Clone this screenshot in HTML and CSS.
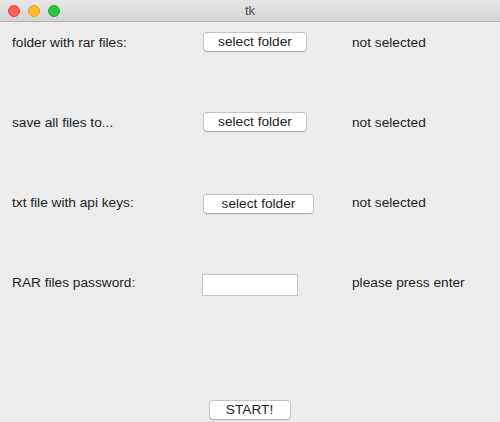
FILE: index.html
```html
<!DOCTYPE html>
<html>
<head>
<meta charset="utf-8">
<link rel="stylesheet" href="styles.css">
</head>
<body>
<div class="window">
  <div class="titlebar">
    <div class="lights">
      <span class="light red"></span>
      <span class="light yellow"></span>
      <span class="light green"></span>
    </div>
    <div class="title">tk</div>
  </div>
  <div class="content">
    <div class="form">
      <div class="label">folder with rar files:</div>
      <div class="cell"><button class="btn w104">select folder</button></div>
      <div class="status">not selected</div>

      <div class="label">save all files to...</div>
      <div class="cell"><button class="btn w104">select folder</button></div>
      <div class="status">not selected</div>

      <div class="label">txt file with api keys:</div>
      <div class="cell"><button class="btn w111 low">select folder</button></div>
      <div class="status">not selected</div>

      <div class="label">RAR files password:</div>
      <div class="cell"><input class="entry" type="text"></div>
      <div class="status">please press enter</div>
    </div>
    <div class="footer">
      <button class="btn start">START!</button>
    </div>
  </div>
</div>
</body>
</html>
```

FILE: styles.css
```css
* { box-sizing: border-box; }
html, body {
  margin: 0;
  padding: 0;
  width: 500px;
  height: 422px;
  overflow: hidden;
  background: #ececec;
  font-family: "Liberation Sans", Arial, sans-serif;
  font-size: 13.7px;
  color: #1e1e1e;
}
.window {
  width: 500px;
  height: 422px;
  display: flex;
  flex-direction: column;
}
.titlebar {
  height: 22px;
  flex: none;
  position: relative;
  background: linear-gradient(#e8e8e8, #d3d3d3);
  border-bottom: 1px solid #b1b1b1;
  display: flex;
  align-items: center;
  justify-content: center;
}
.lights {
  position: absolute;
  left: 8px;
  top: 5px;
  display: flex;
  gap: 8px;
}
.light {
  width: 12px;
  height: 12px;
  border-radius: 50%;
  display: block;
}
.red { background: #fe5f57; border: 0.5px solid #e14640; }
.yellow { background: #febc2e; border: 0.5px solid #dfa123; }
.green { background: #28c840; border: 0.5px solid #1daa2c; }
.title {
  color: #4d4d4d;
  font-size: 13px;
  line-height: 22px;
}
.content {
  flex: 1;
  display: flex;
  flex-direction: column;
  padding-top: 10px;
}
.form {
  display: grid;
  grid-template-columns: 190px 150px 1fr;
  grid-auto-rows: 20px;
  row-gap: 60px;
  padding-left: 12px;
  align-items: center;
}
.label, .status {
  line-height: 16px;
  padding-top: 1px;
  white-space: nowrap;
}
.cell {
  height: 20px;
  display: flex;
  align-items: flex-start;
}
.btn {
  font-family: "Liberation Sans", Arial, sans-serif;
  font-size: 13.7px;
  color: #1e1e1e;
  background: #ffffff;
  border: 1px solid #c4c4c4;
  border-bottom-color: #aeaeae;
  border-radius: 4px;
  height: 20px;
  padding: 0;
  margin: 0;
  line-height: 18px;
  box-shadow: 0 0.5px 0.5px rgba(0,0,0,0.08);
}
.w104 { width: 104px; margin-left: 1px; }
.w111 { width: 111px; margin-left: 1px; }
.low { margin-top: 2px; }
.entry {
  width: 96px;
  height: 22px;
  margin: 2px 0 0 0;
  border: 1px solid #c6c6c6;
  background: #ffffff;
  outline: none;
  padding: 0 3px;
}
.footer {
  margin-top: auto;
  display: flex;
  justify-content: center;
  padding-bottom: 2px;
}
.start {
  width: 82px;
  margin-left: -1px;
}
```
